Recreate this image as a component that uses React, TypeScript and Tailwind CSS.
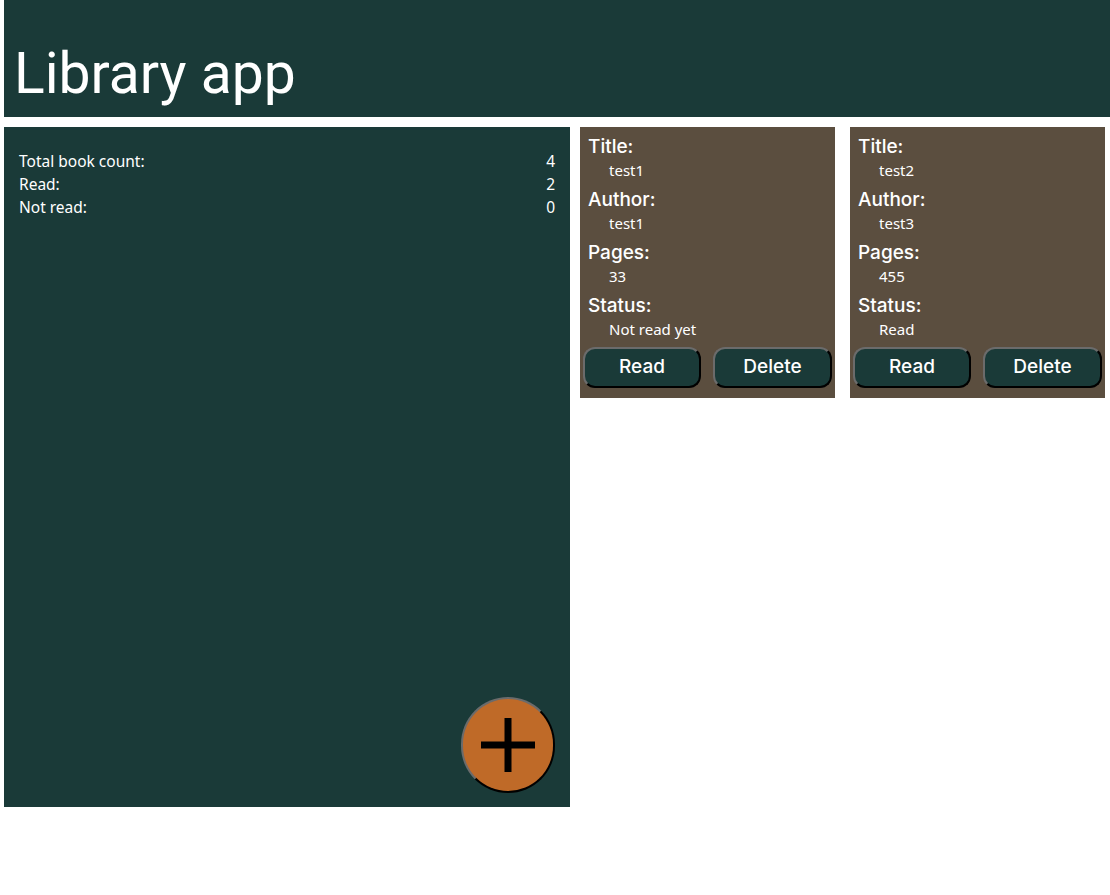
import { useState } from "react";

type Book = {
  title: string;
  author: string;
  pages: number;
  read: boolean;
};

const books: Book[] = [
  { title: "test1", author: "test1", pages: 33, read: false },
  { title: "test2", author: "test3", pages: 455, read: true },
];

function Field({ label, value }: { label: string; value: string | number }) {
  return (
    <div className="mb-[3px]">
      <div className="text-[19px] leading-[24px] font-medium">{label}</div>
      <div className="text-[15px] leading-[29px] pl-[21px] -mt-[3px] font-['Noto_Sans',sans-serif]">{value}</div>
    </div>
  );
}

function BookCard({ book }: { book: Book }) {
  return (
    <div className="w-[255px] h-[271px] bg-[#5b4e3f] text-white px-[8px] pt-[8px] font-['Inter',sans-serif]">
      <Field label="Title:" value={book.title} />
      <Field label="Author:" value={book.author} />
      <Field label="Pages:" value={book.pages} />
      <Field label="Status:" value={book.read ? "Read" : "Not read yet"} />
      <div className="flex justify-between -mx-[5px] mt-[2px]">
        <button className="w-[118px] h-[41px] rounded-[12px] bg-[#1a3a38] text-[19px] font-medium text-white border-2 border-t-[#6b6b6b] border-l-[#6b6b6b] border-r-black border-b-black">
          Read
        </button>
        <button className="w-[119px] h-[41px] rounded-[12px] bg-[#1a3a38] text-[19px] font-medium text-white border-2 border-t-[#6b6b6b] border-l-[#6b6b6b] border-r-black border-b-black">
          Delete
        </button>
      </div>
    </div>
  );
}

export default function App() {
  const [list] = useState(books);
  return (
    <div className="min-h-screen bg-white pl-[4px] font-['Inter',sans-serif]">
      <header className="h-[117px] bg-[#1a3a38] flex items-end pb-[9px] pl-[10px]">
        <h1 className="text-[57px] leading-[68px] text-white font-normal font-['Roboto',sans-serif]">Library app</h1>
      </header>

      <div className="flex mt-[10px]">
        <aside className="w-[566px] h-[680px] bg-[#1a3a38] text-white flex flex-col px-[15px] pt-[23px] pb-[14px] font-['Noto_Sans',sans-serif]">
          <div className="flex justify-between text-[15.5px] leading-[23px]">
            <span>Total book count:</span>
            <span>4</span>
          </div>
          <div className="flex justify-between text-[15.5px] leading-[23px]">
            <span>Read:</span>
            <span>2</span>
          </div>
          <div className="flex justify-between text-[15.5px] leading-[23px]">
            <span>Not read:</span>
            <span>0</span>
          </div>
          <div className="mt-auto flex justify-end">
            <button className="w-[94px] h-[96px] rounded-full bg-[#bf6a28] border-2 border-t-[#6b6b6b] border-l-[#6b6b6b] border-r-black border-b-black flex items-center justify-center">
              <svg width="54" height="54" viewBox="0 0 54 54">
                <rect x="23.5" y="0" width="7" height="54" fill="#000" />
                <rect x="0" y="23.5" width="54" height="7" fill="#000" />
              </svg>
            </button>
          </div>
        </aside>

        <div className="flex items-start gap-[15px] ml-[10px]">
          {list.map((b) => (
            <BookCard key={b.title} book={b} />
          ))}
        </div>
      </div>
    </div>
  );
}
